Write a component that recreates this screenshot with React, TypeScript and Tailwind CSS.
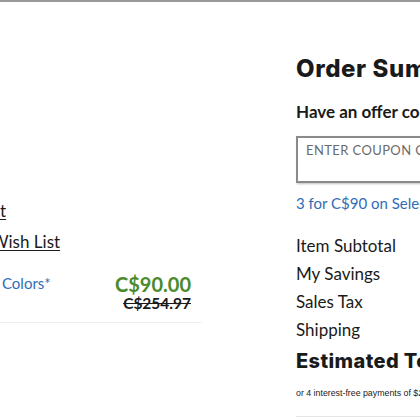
export default function App() {
  const font = { fontFamily: '"Lato", "Liberation Sans", sans-serif' };
  const head = { fontFamily: '"Inter", "Lato", sans-serif' };
  return (
    <div className="w-[420px] h-[420px] overflow-hidden bg-white border-t-2 border-[#999999] text-[#1a1a1a]" style={font}>
      <div className="flex w-[700px]">
        <div className="w-[202px] shrink-0 pt-[199px]">
          <div className="text-[17px] leading-[20px] underline underline-offset-2">t</div>
          <div className="mt-[11px] -ml-[9px] text-[17px] leading-[20px] underline underline-offset-2">Wish List</div>
          <div className="mt-[22px] flex justify-between border-b border-[#efefef] pb-[10px] pr-[11px]">
            <div className="pl-[2px] text-[15px] leading-[18px] text-[#2f6db5]">Colors*</div>
            <div className="flex flex-col items-end">
              <div className="text-[20px] leading-[20px] font-bold text-[#4a8a2c]">C$90.00</div>
              <div className="text-[15.5px] leading-[18px] font-bold line-through">C$254.97</div>
            </div>
          </div>
        </div>
        <div className="ml-[94px] w-[330px] shrink-0 pt-[52px]">
          <div className="text-[24px] leading-[30px] font-extrabold tracking-[0.6px]" style={head}>Order Summary</div>
          <div className="mt-[17px] text-[17px] leading-[22px] font-bold">Have an offer code?</div>
          <div className="mt-[13px] h-[47px] border-2 border-[#8a8a8a] shadow-[1px_1px_2px_rgba(0,0,0,0.25)] px-[8px] pt-[3px] text-[13px] text-[#6b6b6b] tracking-[0.4px]">ENTER COUPON CODE</div>
          <div className="mt-[10px] text-[15px] leading-[20px] text-[#2f6db5]">3 for C$90 on Select Styles</div>
          <div className="mt-[23px] flex flex-col gap-[8px] text-[17px] leading-[20px]">
            <div>Item Subtotal</div>
            <div>My Savings</div>
            <div>Sales Tax</div>
            <div>Shipping</div>
          </div>
          <div className="mt-[8px] text-[20px] leading-[26px] font-extrabold tracking-[0.4px]" style={head}>Estimated Total</div>
          <div className="mt-[14px] text-[8.8px] leading-[10px]" style={{ fontFamily: '"Liberation Sans", Arial, sans-serif' }}>or 4 interest-free payments of $22.50</div>
          <div className="mt-[18px] border-t border-[#e5e5e5]"></div>
        </div>
      </div>
    </div>
  );
}
